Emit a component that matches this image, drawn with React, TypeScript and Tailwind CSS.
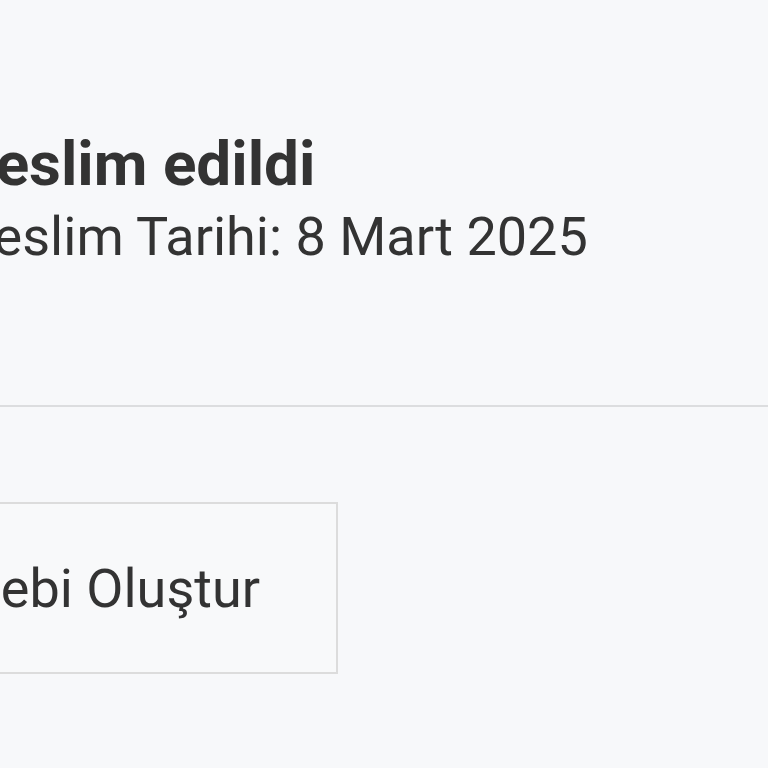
export default function App() {
  return (
    <div
      className="w-[768px] h-[768px] overflow-hidden bg-[#f7f8fa] text-[#333333]"
      style={{ fontFamily: 'Roboto, "Liberation Sans", sans-serif' }}
    >
      {/* Delivery info */}
      <div className="pt-[126px]">
        <div className="-ml-[40px] text-[62px] leading-[76px] font-bold whitespace-nowrap">Teslim edildi</div>
        <div className="-ml-[36px] text-[54px] leading-[70px] whitespace-nowrap">Teslim Tarihi: 8 Mart 2025</div>
      </div>

      <div className="mt-[133px] h-[2px] bg-[#dcdddf]" />

      {/* Action */}
      <div className="mt-[95px] -ml-[200px]">
        <button className="w-[538px] h-[172px] flex items-center justify-end pr-[76px] border-2 border-[#dcdcdc] bg-[#f8f9fa] text-[54px] whitespace-nowrap text-[#333333]">
          Talebi Oluştur
        </button>
      </div>
    </div>
  );
}
